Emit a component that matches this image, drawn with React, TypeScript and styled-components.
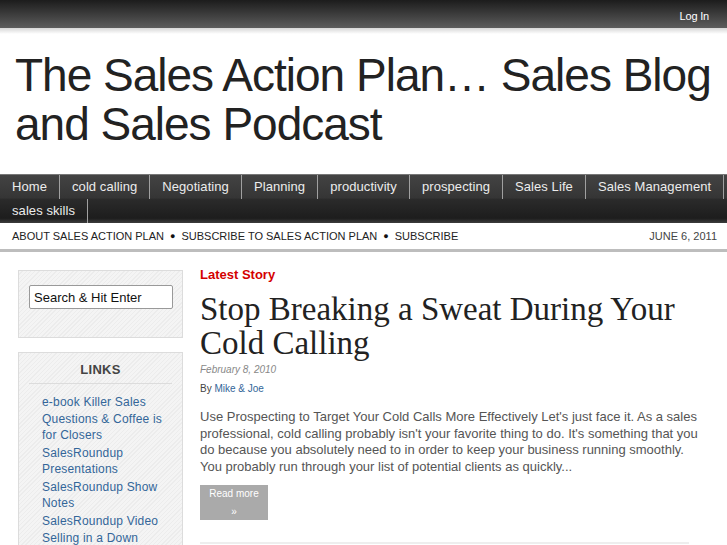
import styled, { createGlobalStyle } from "styled-components";

// Page data.
const NAV_ITEMS = [
  "Home",
  "cold calling",
  "Negotiating",
  "Planning",
  "productivity",
  "prospecting",
  "Sales Life",
  "Sales Management",
  "sales skills",
];

const SUB_LINKS = [
  "ABOUT SALES ACTION PLAN",
  "SUBSCRIBE TO SALES ACTION PLAN",
  "SUBSCRIBE",
];

const LINKS = [
  "e-book Killer Sales Questions & Coffee is for Closers",
  "SalesRoundup Presentations",
  "SalesRoundup Show Notes",
  "SalesRoundup Video",
  "Selling in a Down Economy",
];

const App = () => {
  return (
    <>
      <GlobalStyle />
      <TopBar>
        <LoginLink href="#">Log In</LoginLink>
      </TopBar>
      <TopShadow />
      <Header>
        <SiteTitle>The Sales Action Plan… Sales Blog and Sales Podcast</SiteTitle>
      </Header>

      <Nav>
        {NAV_ITEMS.map((item) => {
          return <NavItem key={item}>{item}</NavItem>;
        })}
      </Nav>

      <SubNav>
        <SubLinks>
          {SUB_LINKS.map((link, index) => {
            return (
              <span key={link}>
                {index > 0 && <Bullet>●</Bullet>}
                <a href="#">{link}</a>
              </span>
            );
          })}
        </SubLinks>
        <DateText>JUNE 6, 2011</DateText>
      </SubNav>

      <Content>
        <Sidebar>
          <Widget>
            <SearchInput defaultValue="Search & Hit Enter" />
          </Widget>
          <Widget>
            <WidgetTitle>LINKS</WidgetTitle>
            <LinkList>
              {LINKS.map((link) => {
                return (
                  <li key={link}>
                    <a href="#">{link}</a>
                  </li>
                );
              })}
            </LinkList>
          </Widget>
        </Sidebar>

        <Main>
          <Label>Latest Story</Label>
          <PostTitle>Stop Breaking a Sweat During Your Cold Calling</PostTitle>
          <PostDate>February 8, 2010</PostDate>
          <Byline>
            By <a href="#">Mike &amp; Joe</a>
          </Byline>
          <Excerpt>
            Use Prospecting to Target Your Cold Calls More Effectively Let's
            just face it. As a sales professional, cold calling probably isn't
            your favorite thing to do. It's something that you do because you
            absolutely need to in order to keep your business running smoothly.
            You probably run through your list of potential clients as
            quickly...
          </Excerpt>
          <ReadMore href="#">
            Read more
            <br />»
          </ReadMore>
          <Divider />
        </Main>
      </Content>
    </>
  );
};

// Styled components.
const GlobalStyle = createGlobalStyle`
  html, body {
    margin: 0;
    padding: 0;
    background: #fff;
    font-family: "Liberation Sans", Arial, sans-serif;
  }

  a {
    text-decoration: none;
  }
`;

const TopBar = styled.div`
  align-items: center;
  background: linear-gradient(#1c1c1c, #5c5c5c);
  display: flex;
  height: 28px;
  justify-content: flex-end;
  padding-right: 18px;
`;

const LoginLink = styled.a`
  color: #fff;
  font-size: 11px;
  letter-spacing: -0.2px;
  padding-top: 4px;
`;

const TopShadow = styled.div`
  background: linear-gradient(#d6d6d6, #fff);
  height: 6px;
`;

const Header = styled.div`
  box-sizing: border-box;
  height: 140px;
  padding: 17px 15px 0;
`;

const SiteTitle = styled.h1`
  color: #222;
  font-size: 46px;
  font-weight: normal;
  letter-spacing: -1px;
  line-height: 49px;
  margin: 0;
`;

const Nav = styled.ul`
  background: linear-gradient(
    #434343 0%,
    #353535 48%,
    #2b2b2b 50%,
    #1d1d1d 90%,
    #3c3c3c 100%
  );
  border-top: 1px solid #777;
  display: flex;
  flex-wrap: wrap;
  list-style: none;
  margin: 0;
  padding: 0;
`;

const NavItem = styled.li`
  border-right: 1px solid #a0a0a0;
  color: #ececec;
  font-size: 13px;
  height: 24px;
  letter-spacing: 0.08px;
  line-height: 24px;
  padding: 0 12px;
`;

const SubNav = styled.div`
  align-items: center;
  border-bottom: 3px solid #bdbdbd;
  display: flex;
  font-size: 11px;
  height: 26px;
  justify-content: space-between;
  padding: 0 10px 0 12px;
`;

const SubLinks = styled.div`
  a {
    color: #222;
  }
`;

const Bullet = styled.span`
  color: #111;
  font-size: 9px;
  margin: 0 6px;
  vertical-align: 1px;
`;

const DateText = styled.span`
  color: #444;
`;

const Content = styled.div`
  display: flex;
  gap: 17px;
  padding: 18px 18px 0;
`;

const Sidebar = styled.div`
  display: flex;
  flex-direction: column;
  flex-shrink: 0;
  gap: 14px;
  width: 165px;
`;

const Widget = styled.div`
  background: repeating-linear-gradient(
    135deg,
    #f4f4f4 0px,
    #f4f4f4 2px,
    #ececec 2px,
    #ececec 3px
  );
  border: 1px solid #dcdcdc;
  box-sizing: border-box;
  min-height: 68px;
  padding: 14px 10px;
`;

const SearchInput = styled.input`
  border: 1px solid #999;
  border-radius: 2px;
  box-sizing: border-box;
  color: #111;
  font-family: "Liberation Sans", Arial, sans-serif;
  font-size: 13px;
  height: 24px;
  padding: 0 4px;
  width: 144px;
`;

const WidgetTitle = styled.h3`
  border-bottom: 1px solid #dcdcdc;
  color: #444;
  font-size: 13px;
  letter-spacing: 0.3px;
  margin: -5px 0 10px;
  padding-bottom: 6px;
  text-align: center;
`;

const LinkList = styled.ul`
  list-style: none;
  margin: 0;
  padding: 0 0 0 13px;

  li {
    font-size: 12px;
    letter-spacing: 0.2px;
    line-height: 16.5px;
    margin-bottom: 1px;
  }

  a {
    color: #336699;
  }
`;

const Main = styled.div`
  flex: 1;
  padding-right: 7px;
`;

const Label = styled.div`
  color: #d40000;
  font-size: 13px;
  font-weight: bold;
  margin-top: -3px;
`;

const PostTitle = styled.h2`
  color: #222;
  font-family: "Liberation Serif", "Times New Roman", serif;
  font-size: 33px;
  font-weight: normal;
  line-height: 34px;
  margin: 10px 0 0;
`;

const PostDate = styled.div`
  color: #888;
  font-size: 10px;
  font-style: italic;
  margin-top: 4px;
`;

const Byline = styled.div`
  color: #444;
  font-size: 10px;
  margin-top: 8px;

  a {
    color: #336699;
  }
`;

const Excerpt = styled.p`
  color: #555;
  font-size: 13px;
  line-height: 16.7px;
  margin: 15px 0 9px;
`;

const ReadMore = styled.a`
  background: #aaa;
  color: #fff;
  display: block;
  font-size: 10px;
  height: 35px;
  line-height: 18px;
  padding: 0;
  text-align: center;
  width: 68px;
`;

const Divider = styled.div`
  border-bottom: 2px solid #eee;
  margin: 22px 13px 0 0;
`;

export default App;
